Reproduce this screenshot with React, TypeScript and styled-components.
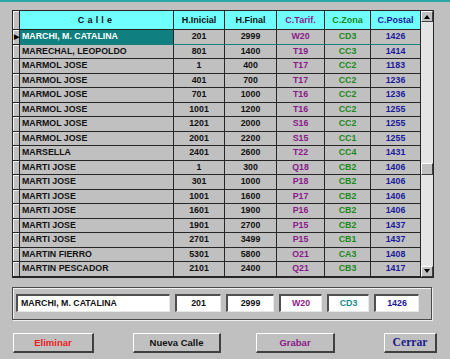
import styled, { createGlobalStyle } from "styled-components";

const Global = createGlobalStyle`
  html, body {
    margin: 0;
    padding: 0;
    background: #c0c0c0;
  }
`;

const Window = styled.div`
  width: 450px;
  height: 359px;
  box-sizing: border-box;
  background: #c0c0c0;
  border-top: 2px solid #2aa6a6;
  padding: 8px 0 0 12px;
  font-family: "Liberation Sans", Arial, sans-serif;
  font-weight: bold;
  overflow: hidden;
`;

const GridFrame = styled.div`
  display: flex;
  width: 422px;
  box-sizing: border-box;
  border: 1px solid #262626;
  background: #c0c0c0;
`;

const Table = styled.div`
  display: grid;
  grid-template-columns: 7px 154px 51px 52px 48px 46px 50px;
  grid-template-rows: 19px;
  grid-auto-rows: 14.5px;
`;

const Cell = styled.div<{ $align?: string; $color?: string; $sel?: boolean; $rowSel?: boolean }>`
  box-sizing: border-box;
  border-right: 1px solid #262626;
  border-bottom: 1px solid ${(p) => (p.$sel || p.$rowSel ? "#1a7f7f" : "#262626")};
  background: ${(p) => (p.$sel ? "#0f7f80" : "#c0c0c0")};
  color: ${(p) => (p.$sel ? "#ffffff" : p.$color || "#111")};
  font-size: 8.8px;
  line-height: 13px;
  text-align: ${(p) => p.$align || "center"};
  padding-left: ${(p) => (p.$align === "left" ? "2px" : "0")};
  white-space: nowrap;
  overflow: hidden;
`;

const Head = styled(Cell)<{ $spaced?: boolean }>`
  background: #70ffff;
  line-height: 18px;
  font-size: 9px;
  letter-spacing: ${(p) => (p.$spaced ? "3.2px" : "0")};
`;

const Indicator = styled.div`
  box-sizing: border-box;
  border-right: 1px solid #262626;
  border-bottom: 1px solid #262626;
  background: #c0c0c0;
  box-shadow: inset 1px 1px #f4f4f4;
  display: flex;
  align-items: center;
  justify-content: center;
  font-size: 7px;
  color: #000;
`;

const Scroll = styled.div`
  display: flex;
  flex-direction: column;
  width: 12px;
  background: #e4e4e4;
`;

const ScrollBtn = styled.div`
  box-sizing: border-box;
  height: 11px;
  width: 12px;
  background: #c0c0c0;
  border-top: 1px solid #fff;
  border-left: 1px solid #fff;
  border-right: 1px solid #404040;
  border-bottom: 1px solid #404040;
  display: flex;
  align-items: center;
  justify-content: center;
`;

const Track = styled.div`
  flex: 1;
  display: flex;
  flex-direction: column;
`;

const Thumb = styled(ScrollBtn)<{ $top: number }>`
  margin-top: ${(p) => p.$top}px;
  height: 12px;
`;

const Panel = styled.div`
  margin-top: 9px;
  width: 420px;
  height: 33px;
  box-sizing: border-box;
  border: 1px solid #4a4a4a;
  box-shadow: inset 1px 1px #f0f0f0, 1px 1px #f0f0f0;
  display: flex;
  align-items: center;
  gap: 5px;
  padding-left: 3px;
`;

const Field = styled.div<{ $w: number; $color?: string; $left?: boolean }>`
  box-sizing: border-box;
  width: ${(p) => p.$w}px;
  height: 18px;
  background: #fff;
  border-top: 2px solid #505050;
  border-left: 2px solid #505050;
  border-right: 1px solid #e8e8e8;
  border-bottom: 1px solid #e8e8e8;
  color: ${(p) => p.$color || "#111"};
  font-size: 8.8px;
  line-height: 15px;
  text-align: ${(p) => (p.$left ? "left" : "center")};
  padding-left: ${(p) => (p.$left ? "3px" : "0")};
  white-space: nowrap;
`;

const Buttons = styled.div`
  display: flex;
  margin-top: 13px;
`;

const Button = styled.div<{ $w: number; $ml: number; $color: string; $serif?: boolean }>`
  box-sizing: border-box;
  width: ${(p) => p.$w}px;
  height: 20px;
  margin-left: ${(p) => p.$ml}px;
  background: #c0c0c0;
  border-top: 1px solid #fff;
  border-left: 1px solid #fff;
  border-right: 2px solid #404040;
  border-bottom: 2px solid #404040;
  color: ${(p) => p.$color};
  font-family: ${(p) =>
    p.$serif ? '"Liberation Serif", "Times New Roman", serif' : '"Liberation Sans", Arial, sans-serif'};
  font-size: ${(p) => (p.$serif ? "11.6px" : "9.5px")};
  font-weight: bold;
  display: flex;
  align-items: center;
  justify-content: center;
`;

const TARIF = "#8a1a8a";
const ZONA = "#1a8a1a";
const POSTAL = "#1a1a9a";

const rows: [string, string, string, string, string, string][] = [
  ["MARCHI, M. CATALINA", "201", "2999", "W20", "CD3", "1426"],
  ["MARECHAL, LEOPOLDO", "801", "1400", "T19", "CC3", "1414"],
  ["MARMOL JOSE", "1", "400", "T17", "CC2", "1183"],
  ["MARMOL JOSE", "401", "700", "T17", "CC2", "1236"],
  ["MARMOL JOSE", "701", "1000", "T16", "CC2", "1236"],
  ["MARMOL JOSE", "1001", "1200", "T16", "CC2", "1255"],
  ["MARMOL JOSE", "1201", "2000", "S16", "CC2", "1255"],
  ["MARMOL JOSE", "2001", "2200", "S15", "CC1", "1255"],
  ["MARSELLA", "2401", "2600", "T22", "CC4", "1431"],
  ["MARTI JOSE", "1", "300", "Q18", "CB2", "1406"],
  ["MARTI JOSE", "301", "1000", "P18", "CB2", "1406"],
  ["MARTI JOSE", "1001", "1600", "P17", "CB2", "1406"],
  ["MARTI JOSE", "1601", "1900", "P16", "CB2", "1406"],
  ["MARTI JOSE", "1901", "2700", "P15", "CB2", "1437"],
  ["MARTI JOSE", "2701", "3499", "P15", "CB1", "1437"],
  ["MARTIN FIERRO", "5301", "5800", "O21", "CA3", "1408"],
  ["MARTIN PESCADOR", "2101", "2400", "Q21", "CB3", "1417"],
];

function Arrow({ up }: { up?: boolean }) {
  return (
    <svg width="6" height="4" viewBox="0 0 6 4">
      <polygon points={up ? "3,0 6,4 0,4" : "0,0 6,0 3,4"} fill="#000" />
    </svg>
  );
}

export default function App() {
  return (
    <Window>
      <Global />
      <GridFrame>
        <Table>
          <Indicator />
          <Head $spaced>Calle</Head>
          <Head>H.Inicial</Head>
          <Head>H.Final</Head>
          <Head $color={TARIF}>C.Tarif.</Head>
          <Head $color={ZONA}>C.Zona</Head>
          <Head $color={POSTAL}>C.Postal</Head>
          {rows.map((r, i) => {
            const first = i === 0;
            return [
              <Indicator key={`i${i}`}>{first ? "▶" : ""}</Indicator>,
              <Cell key={`a${i}`} $align="left" $sel={first}>
                {r[0]}
              </Cell>,
              <Cell key={`b${i}`} $rowSel={first}>{r[1]}</Cell>,
              <Cell key={`c${i}`} $rowSel={first}>{r[2]}</Cell>,
              <Cell key={`d${i}`} $rowSel={first} $color={TARIF}>
                {r[3]}
              </Cell>,
              <Cell key={`e${i}`} $rowSel={first} $color={ZONA}>
                {r[4]}
              </Cell>,
              <Cell key={`f${i}`} $rowSel={first} $color={POSTAL}>
                {r[5]}
              </Cell>,
            ];
          })}
        </Table>
        <Scroll>
          <ScrollBtn>
            <Arrow up />
          </ScrollBtn>
          <Track>
            <Thumb $top={141} />
          </Track>
          <ScrollBtn>
            <Arrow />
          </ScrollBtn>
        </Scroll>
      </GridFrame>
      <Panel>
        <Field $w={154} $left>
          MARCHI, M. CATALINA
        </Field>
        <Field $w={46}>201</Field>
        <Field $w={48}>2999</Field>
        <Field $w={43} $color={TARIF}>
          W20
        </Field>
        <Field $w={42} $color="#1a8a8a">
          CD3
        </Field>
        <Field $w={45} $color={POSTAL}>
          1426
        </Field>
      </Panel>
      <Buttons>
        <Button $w={81} $ml={1} $color="#e82020">
          Eliminar
        </Button>
        <Button $w={88} $ml={39} $color="#111">
          Nueva Calle
        </Button>
        <Button $w={79} $ml={35} $color={TARIF}>
          Grabar
        </Button>
        <Button $w={53} $ml={49} $color="#1a1a8a" $serif>
          Cerrar
        </Button>
      </Buttons>
    </Window>
  );
}
